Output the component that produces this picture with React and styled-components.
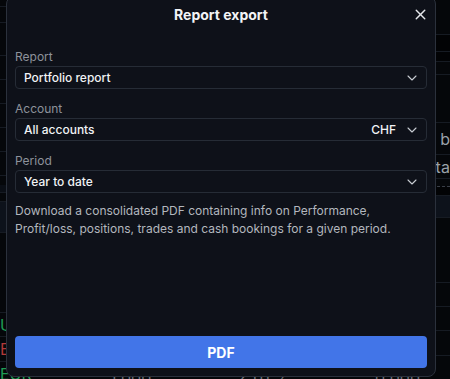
import React from 'react';
import styled, { createGlobalStyle } from 'styled-components';
import { ChevronDown, X } from 'lucide-react';

const GlobalStyle = createGlobalStyle`
  html, body {
    margin: 0;
    padding: 0;
    background: #05070a;
    font-family: Inter, "Noto Sans", sans-serif;
    overflow: hidden;
  }
`;

const leftRows = [
  { h: 7 }, { h: 16 }, { h: 33 }, { h: 24 }, { h: 24 }, { h: 24 }, { h: 24 },
  { h: 24 }, { h: 9, line: false }, { h: 8, tone: 'band' }, { h: 9 },
  { h: 31, tone: 'light' }, { h: 80 },
  { h: 24, text: 'USD', color: '#1f9d55' },
  { h: 25, text: 'EUR', color: '#b33a3a' },
  { h: 24, text: 'EUR', color: '#1f9d55' },
];

const rightRows = [
  { h: 35 }, { h: 17, tone: 'black' }, { h: 10, tone: 'black' }, { h: 13 },
  { h: 48 }, { h: 32, text: 'n b' }, { h: 24, text: 'eta' },
  { h: 8, dashed: true }, { h: 9, tone: 'black' }, { h: 22, tone: 'light' },
  { h: 65 }, { h: 24 }, { h: 24 }, { h: 25 }, { h: 24 },
];

const App = () => {
  return (
    <Page>
      <GlobalStyle />
      <Backdrop>
        <Pane>
          {leftRows.map((r, i) => (
            <BgRow key={i} $h={r.h} $tone={r.tone} $line={r.line !== false}>
              {r.text && <BgText $color={r.color}>{r.text}</BgText>}
            </BgRow>
          ))}
        </Pane>
        <Pane>
          {rightRows.map((r, i) => (
            <BgRow key={i} $h={r.h} $tone={r.tone} $dashed={r.dashed} $line>
              {r.text && <RightText>{r.text}</RightText>}
            </BgRow>
          ))}
        </Pane>
        <BottomRow>
          <span>1 000</span>
          <span>2 111 %</span>
          <span>0 000</span>
        </BottomRow>
      </Backdrop>

      <Modal>
        <Header>
          <Title>Report export</Title>
          <CloseButton aria-label="Close">
            <X size={17} strokeWidth={2} />
          </CloseButton>
        </Header>

        <Body>
          <Field>
            <Label>Report</Label>
            <Select>
              <Value>Portfolio report</Value>
              <Chevron />
            </Select>
          </Field>

          <Field>
            <Label>Account</Label>
            <Select>
              <Value>All accounts</Value>
              <Currency>CHF</Currency>
              <Chevron />
            </Select>
          </Field>

          <Field>
            <Label>Period</Label>
            <Select>
              <Value>Year to date</Value>
              <Chevron />
            </Select>
          </Field>

          <Description>
            Download a consolidated PDF containing info on Performance,
            Profit/loss, positions, trades and cash bookings for a given period.
          </Description>
        </Body>

        <PdfButton>PDF</PdfButton>
      </Modal>
    </Page>
  );
};

export default App;

const Chevron = () => (
  <ChevronIcon>
    <ChevronDown size={16} strokeWidth={1.6} />
  </ChevronIcon>
);

const Page = styled.div`
  position: relative;
  width: 450px;
  height: 379px;
  overflow: hidden;
`;

const Backdrop = styled.div`
  display: grid;
  grid-template-columns: 1fr 1fr;
  height: 100%;
  background: #05070a;
`;

const Pane = styled.div`
  display: flex;
  flex-direction: column;
`;

const BgRow = styled.div`
  height: ${(p) => p.$h}px;
  flex-shrink: 0;
  display: flex;
  align-items: center;
  border-bottom: 1px ${(p) => (p.$dashed ? 'dashed #3a3f48' : 'solid')}
    ${(p) => (p.$dashed ? '' : p.$line ? '#161b23' : 'transparent')};
  background: ${(p) =>
    p.$tone === 'light' ? '#0d121b' : p.$tone === 'band' ? '#0a0e15' : p.$tone === 'black' ? '#020305' : 'transparent'};
  box-sizing: border-box;
`;

const BgText = styled.span`
  font-size: 16px;
  color: ${(p) => p.$color};
`;

const RightText = styled.span`
  font-size: 16px;
  color: #9aa0a8;
  margin-left: 208px;
  white-space: nowrap;
`;

const BottomRow = styled.div`
  position: absolute;
  left: 110px;
  right: 30px;
  top: 368px;
  display: flex;
  justify-content: space-between;
  font-size: 16px;
  color: #6b7078;
`;

const Modal = styled.div`
  position: absolute;
  top: -4px;
  left: 6px;
  width: 430px;
  height: 381px;
  box-sizing: border-box;
  display: flex;
  flex-direction: column;
  background: #0e1119;
  border: 1px solid #2b313c;
  border-radius: 8px;
  padding: 0 8px 8px;
`;

const Header = styled.div`
  position: relative;
  height: 34px;
  display: flex;
  align-items: center;
  justify-content: center;
`;

const Title = styled.h2`
  margin: 0;
  font-size: 14px;
  font-weight: 700;
  color: #f3f4f6;
`;

const CloseButton = styled.button`
  position: absolute;
  right: -2px;
  top: 9px;
  display: flex;
  padding: 0;
  border: none;
  background: none;
  color: #e5e7eb;
`;

const Body = styled.div`
  flex: 1;
  display: flex;
  flex-direction: column;
  gap: 11px;
  padding-top: 17px;
`;

const Field = styled.div`
  display: flex;
  flex-direction: column;
  gap: 1px;
`;

const Label = styled.label`
  font-size: 12px;
  line-height: 17px;
  color: #8d929b;
`;

const Select = styled.div`
  height: 23px;
  box-sizing: border-box;
  display: flex;
  align-items: center;
  gap: 8px;
  padding: 0 6px 0 8px;
  border: 1px solid #262c36;
  border-radius: 4px;
`;

const Value = styled.span`
  flex: 1;
  font-size: 12px;
  font-weight: 500;
  color: #f1f3f5;
`;

const Currency = styled.span`
  font-size: 12px;
  font-weight: 500;
  color: #f1f3f5;
`;

const ChevronIcon = styled.span`
  display: flex;
  color: #c9cdd3;
`;

const Description = styled.p`
  margin: -2px 0 0;
  font-size: 12px;
  line-height: 18px;
  color: #b3b7be;
`;

const PdfButton = styled.button`
  height: 32px;
  border: none;
  border-radius: 4px;
  background: #4275e8;
  color: #ffffff;
  font-family: Inter, "Noto Sans", sans-serif;
  font-size: 14px;
  font-weight: 700;
`;
